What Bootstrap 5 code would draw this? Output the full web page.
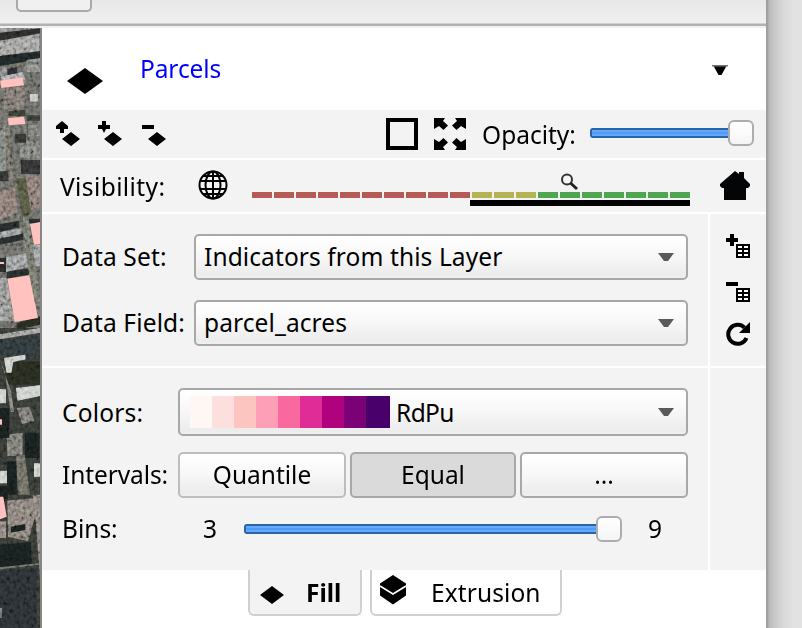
<!DOCTYPE html>
<html lang="en">
<head>
<meta charset="utf-8">
<title>Layer panel</title>
<link href="https://cdn.jsdelivr.net/npm/bootstrap@5.3.0/dist/css/bootstrap.min.css" rel="stylesheet">
<style>
body{width:802px;height:628px;overflow:hidden;background:#e2e2e2;font-family:"Noto Sans","Open Sans",sans-serif;font-size:24.5px;line-height:34px;color:#000}
svg{display:block;flex:none}
.win{width:766px}
.topbar{height:28px;background:linear-gradient(#e8e8e8,#f0f0f0 23px,#b2b2b2 24px,#b2b2b2 26px,#f1f1f1 26px)}
.stub{width:76px;height:12px;margin-left:16px;border:2px solid #a9a9a9;border-top:0;border-radius:0 0 5px 5px;background:#f0f0f0}
.shade{width:36px;background:linear-gradient(90deg,#9c9c9c 0,#a4a4a4 2px,#b9b9b9 3px,#c4c4c4 7px,#d0d0d0 13px,#dcdcdc 20px,#e2e2e2 28px)}
.aerial{width:42px;height:600px}
.panel{width:724px;height:600px}
.g{background:#f3f3f3}
.head{height:82px}
.layer-name{padding-left:36px;color:#00f;letter-spacing:-.1px}
.tools{height:48px}
.vis{height:52px}
.data{height:152px;padding:20px 0 0 20px}
.style{height:202px;padding:20px 0 0 20px}
.main{width:666px}
.side{width:56px}
.gap2{gap:2px}
.sel,.bt{border:2px solid #a8a8a8;border-radius:5px;background:linear-gradient(#fff,#f8f8f8 45%,#ececec 92%,#f0f0f0);color:#000}
.sel{height:46px;width:494px;padding:0 12px 0 8px;letter-spacing:.1px}
.sel.wide{height:48px;width:510px;padding-left:10px}
.bt{height:46px;width:168px;padding:0;font-size:inherit;line-height:34px}
.bt.soft{border-color:#bdbdbd}
.bt.eq{background:#dadada;width:166px}
.lab{white-space:nowrap;flex:none}
.low{padding-top:2px}
.l1{width:132px;letter-spacing:.15px}.l2{width:116px}
.track{height:10px;flex:none;background:linear-gradient(#2864a8 0 2px,#66a8fa 2px 4px,#4f9bf6 4px 6px,#66a8fa 6px 8px,#2864a8 8px);border:solid #2864a8;border-width:0 0 0 2px;border-radius:3px 0 0 3px}
.t1{width:138px}.t2{width:352px}
.up{margin-bottom:2px}
.thumb{width:26px;height:26px;border:2px solid #adadad;border-radius:6px;background:linear-gradient(#fff,#f5f5f5);flex:none}
.ramp i{width:22px;height:32px}
.ramp i:last-child{width:24px}
.name{padding:2px 0 0 6px;letter-spacing:-.6px}
.zoombar{width:438px;height:34px;margin-left:24px;margin-top:8px}
.zoombar i{width:20px;height:6px}
.r{background:#b75a57}.y{background:#b3b351}.n{background:#50a650}
.range{width:220px;height:6px;background:#000;margin-top:2px}
.tab{height:46px;border:2px solid #d0d0d0;border-top:0;border-radius:0 0 6px 6px}
.tab span{padding-top:2px}
.tfill{width:114px;margin-left:206px;margin-right:8px;padding-left:9px}
.text{width:192px;padding-left:8px}
</style>
<script src="https://cdn.jsdelivr.net/npm/bootstrap@5.3.0/dist/js/bootstrap.bundle.min.js"></script>
</head>
<body class="d-flex">
<svg width="0" height="0" class="position-absolute"><defs>
<g id="tbl"><path d="M0 0h14v14H0z"/><path fill="#fff" d="M2 2h4v2H2zM8 2h4v2H8zM2 6h4v2H2zM8 6h4v2H8zM2 10h4v2H2zM8 10h4v2H8z"/></g>
<g id="arr"><path d="M0 0h11l-2 3 5 4.500-4.500 4.500L5 8 0 11z"/></g>
<path id="dn" d="M0 0h16l-6 8H6z"/>
</defs></svg>
<div class="win">
 <div class="topbar"><div class="stub"></div></div>
 <div class="d-flex">
  <svg class="aerial" viewBox="0 0 126 1800">
   <defs><filter id="nz" x="0" y="0" width="100%" height="100%"><feTurbulence type="fractalNoise" baseFrequency=".1 .09" numOctaves="2" seed="8"/><feColorMatrix values="1.6 0 0 0 -.3 1.6 0 0 0 -.3 1.6 0 0 0 -.31 0 0 0 0 1"/></filter><filter id="soft"><feGaussianBlur stdDeviation="1.800"/></filter></defs>
   <path fill="#5d5d5a" d="M0 0h126v900H0z"/><path fill="#30332f" d="M0 900h126v900H0z"/>
   <g filter="url(#soft)">
   <path fill="#7a7a79" d="M0 0h126v12L0 28z"/><path fill="#252725" d="M0 14L126 0v14L0 38z"/>
   <path fill="#8f908f" d="M0 38l118-20v50L0 84z"/><path fill="#1f2120" d="M0 84l120-14v24L0 114z"/>
   <path fill="#777" d="M80 96l40-6v42H80zM0 118h20v26H0z"/><path fill="#25272b" d="M22 122l30-4v24H22z"/>
   <path fill="#9d9ca4" d="M2 146l65-14 8 22-70 8z"/><path fill="#6e6763" d="M10 180l64-4v66H12z"/>
   <path fill="#b5b6b4" d="M90 198h24v22H90z"/><path fill="#30342f" d="M24 250l52-4v18H24zM80 262h40v16H80z"/>
   <path fill="#6e6f6d" d="M0 290h18v140H0zM60 340h60v50H60zM84 290h36v34H84z"/>
   <path fill="#2d2f2d" d="M44 318h34v26H44zM62 396h58v42H64zM0 430h28v30H0z"/>
   <path fill="#66645d" d="M12 248h14l20 330H34z"/><path fill="#4c4e3a" d="M48 450h36l14 100-30 30z"/>
   <path fill="#776b66" d="M76 442l44-4v100l-28 10zM0 488l44-6 10 70-54 24z"/>
   <path fill="#242725" d="M0 588l58-10v20L0 612zM0 632l70-16v20L0 650zM84 572h36v14H84zM0 690h18v42H0zM20 730l76-10v18l-76 14z"/>
   <path fill="#888b8d" d="M0 612l64-10v16L0 630zM18 688l64-14v44l-64 14zM98 650h22v64h-16z"/>
   <path fill="#666860" d="M68 560l18 10 34 230v80h-10L72 640z"/><path fill="#7e807f" d="M0 750h20l24 130H0z"/>
   <path fill="#24271f" d="M50 885l70-20v25l-70 15zM20 1000h106v70H20z"/>
   <path fill="#8b8c8b" d="M0 918l120-18v14L0 934z"/><path fill="#2b3035" d="M0 940l118-18v60H0z"/>
   <path fill="#c4c7c3" d="M12 990l64-10v14l-36 8-6 32H20zM0 1084h18v42H0zM48 1080l72-8v32l-68 14zM102 1306h18v40h-18zM0 1328h26v38H0z"/>
   <path fill="#6d6c67" d="M0 998l14 32 18 122h10l-8-60zM50 1140l38-4 16 44-38 8zM20 1220l48-6v70H22z"/>
   <path fill="#171d1b" d="M0 1140h28v90H0zM74 1214h44v76H74zM20 1300h30v100H22zM0 1374h24v40H0z"/>
   <path fill="#5f5e58" d="M48 1280h26l16 120H54z"/><path fill="#77706c" d="M22 1418l82-8v60l-20 70-60-14zM0 1480h18v50H0zM98 1400h22v250l-12-160z"/>
   <path fill="#191e1d" d="M32 1496l44-8v18l-44 8zM0 1550l94-8v66l-94 12z"/><path fill="#262c2d" d="M0 1628l110-8v180H0z"/>
   <path fill="#5f6460" d="M0 1618l116-12v4L0 1624zM0 1740h6v30H0z"/>
   </g>
   <rect width="126" height="1800" filter="url(#nz)" opacity=".5" style="mix-blend-mode:overlay"/>
   <path fill="#ffc2be" d="M0 158l68-10 4 24-68 8zM24 270l48-4 4 22-50 4zM90 588l30-6v66l-18 2zM0 702h12v6H0zM22 752l66-10 26 128-70 12zM0 1174h6v16H0zM0 1406h10l10 60-20 8z"/>
   <path fill="#858585" d="M120 0h6v1800h-6z"/>
  </svg>
  <div class="panel bg-white d-flex flex-column gap2">
   <div>
    <div class="head d-flex align-items-center">
     <svg width="38" height="28" class="ms-4 mt-4" viewBox="0 0 38 28"><path d="M19 1l18 13-18 13L1 14z"/></svg>
     <span class="lab layer-name flex-fill">Parcels</span>
     <svg width="16" height="12" viewBox="0 0 16 12" style="margin-right:38px;margin-top:4px"><path d="M1 0h14L9.500 10h-3z"/><path fill="#777" d="M0 0h16v1.500H0z"/></svg>
    </div>
    <div class="tools g d-flex align-items-center">
     <svg width="114" height="26" viewBox="0 0 114 26" style="margin-left:14px"><path d="M6 0l6 5v3H8v4H4V8H0V5zM15 11l9 7-9 7-9-7zM46 0h4v4l4 0v4h-4l-2 4-2-4h-4V4h4zM57 11l9 7-9 7-9-7zM86 4h12v4H86zM101 11l9 7-9 7-9-7z"/></svg>
     <svg width="80" height="32" viewBox="0 0 80 32" style="margin-left:216px"><path fill="none" stroke="#000" stroke-width="4" d="M2 2h28v28H2z"/><use href="#arr" x="48"/><use href="#arr" transform="matrix(-1 0 0 1 80 0)"/><use href="#arr" transform="matrix(1 0 0 -1 48 32)"/><use href="#arr" transform="matrix(-1 0 0 -1 80 32)"/></svg>
     <span class="lab low" style="width:124px;padding-left:16px">Opacity:</span>
     <div class="track t1 up"></div><div class="thumb up"></div>
    </div>
   </div>
   <div class="vis g d-flex align-items-center">
    <span class="lab low" style="width:138px;margin-left:18px;letter-spacing:.4px">Visibility:</span>
    <svg class="up" width="30" height="30" viewBox="0 0 30 30" fill="none" stroke="#000" stroke-width="2"><circle cx="15" cy="15" r="13.500"/><path d="M15 1v28M2 11h26M2 19h26M5 6h20M5 24h20"/><ellipse cx="15" cy="15" rx="7.500" ry="13.500"/></svg>
    <div class="zoombar">
     <svg width="18" height="18" viewBox="0 0 18 18" style="margin-left:308px"><circle cx="7" cy="6.500" r="5" fill="#f5f5f5" stroke="#333" stroke-width="2"/><path stroke="#222" stroke-width="3" d="M10.500 10l6.500 6"/></svg>
     <div class="d-flex gap2" style="margin-top:1px"><i class="r"></i><i class="r"></i><i class="r"></i><i class="r"></i><i class="r"></i><i class="r"></i><i class="r"></i><i class="r"></i><i class="r"></i><i class="r"></i><i class="y"></i><i class="y"></i><i class="y"></i><i class="n"></i><i class="n"></i><i class="n"></i><i class="n"></i><i class="n"></i><i class="n"></i><i class="n"></i></div>
     <div class="range ms-auto"></div>
    </div>
    <svg width="30" height="30" viewBox="0 0 30 30" style="margin-left:30px"><path fill="#030507" d="M15 0l4 3V1h5v6l6 6v2l-2 2h-2v12H4V17H2l-2-2v-2z"/></svg>
   </div>
   <div class="d-flex gap2">
    <div class="main data g">
     <div class="d-flex align-items-center mb-3"><span class="lab l1">Data Set:</span><div class="sel d-flex align-items-center justify-content-between"><span>Indicators from this Layer</span><svg width="16" height="8"><use href="#dn" fill="#5a5a5a"/></svg></div></div>
     <div class="d-flex align-items-center" style="padding-top:4px"><span class="lab l1">Data Field:</span><div class="sel d-flex align-items-center justify-content-between"><span>parcel_acres</span><svg width="16" height="8"><use href="#dn" fill="#5a5a5a"/></svg></div></div>
    </div>
    <div class="side data g" style="padding-left:16px">
     <svg width="24" height="24"><path d="M4 0h4v4h4v4H8v4H4V8H0V4h4z"/><use href="#tbl" x="10" y="10"/></svg>
     <svg width="24" height="20" style="margin-top:24px"><path d="M0 0h12v4H0z"/><use href="#tbl" x="10" y="6"/></svg>
     <svg width="24" height="24" style="margin-top:20px"><path fill="none" stroke="#000" stroke-width="4" d="M18.500 5.600A9.500 9.500 0 1 0 20.500 16"/><path d="M24 0v11H13z"/></svg>
    </div>
   </div>
   <div>
    <div class="d-flex gap2">
     <div class="main style g">
      <div class="d-flex align-items-center"><span class="lab l2 low" style="letter-spacing:.2px">Colors:</span><div class="sel wide d-flex align-items-center"><div class="ramp d-flex"><i style="background:#fff7f3"></i><i style="background:#fde0dd"></i><i style="background:#fcc5c0"></i><i style="background:#fc9fb7"></i><i style="background:#fa68a0"></i><i style="background:#e02c97"></i><i style="background:#b0017e"></i><i style="background:#7b0177"></i><i style="background:#49006a"></i></div><span class="flex-fill name">RdPu</span><svg width="16" height="8"><use href="#dn" fill="#5a5a5a"/></svg></div></div>
      <div class="d-flex align-items-center mt-3"><span class="lab l2" style="letter-spacing:-.1px">Intervals:</span><div class="d-flex gap-1"><button class="bt soft">Quantile</button><button class="bt eq">Equal</button><button class="bt">...</button></div></div>
      <div class="d-flex align-items-center" style="margin-top:14px"><span class="lab" style="width:141px">Bins:</span><span class="lab" style="width:41px">3</span><div class="track t2"></div><div class="thumb"></div><span style="padding-left:26px">9</span></div>
     </div>
     <div class="side g"></div>
    </div>
    <div class="d-flex">
     <div class="tab tfill g d-flex align-items-center fw-bold"><svg width="26" height="20" viewBox="0 0 26 20" style="margin-top:6px"><path d="M13 1l12 9-12 9L1 10z"/></svg><span style="padding-left:21px">Fill</span></div>
     <div class="tab text d-flex align-items-center"><svg width="26" height="30" viewBox="0 0 26 30" style="margin-top:-5px"><path d="M13 0l13 8.500v12L13 29.500 0 20.500v-12z"/><path fill="none" stroke="#fff" stroke-width="1.600" d="M0 11l13 8 13-8"/></svg><span style="padding-left:25px;letter-spacing:.1px">Extrusion</span></div>
    </div>
   </div>
  </div>
 </div>
</div>
<div class="shade"></div>
</body>
</html>
